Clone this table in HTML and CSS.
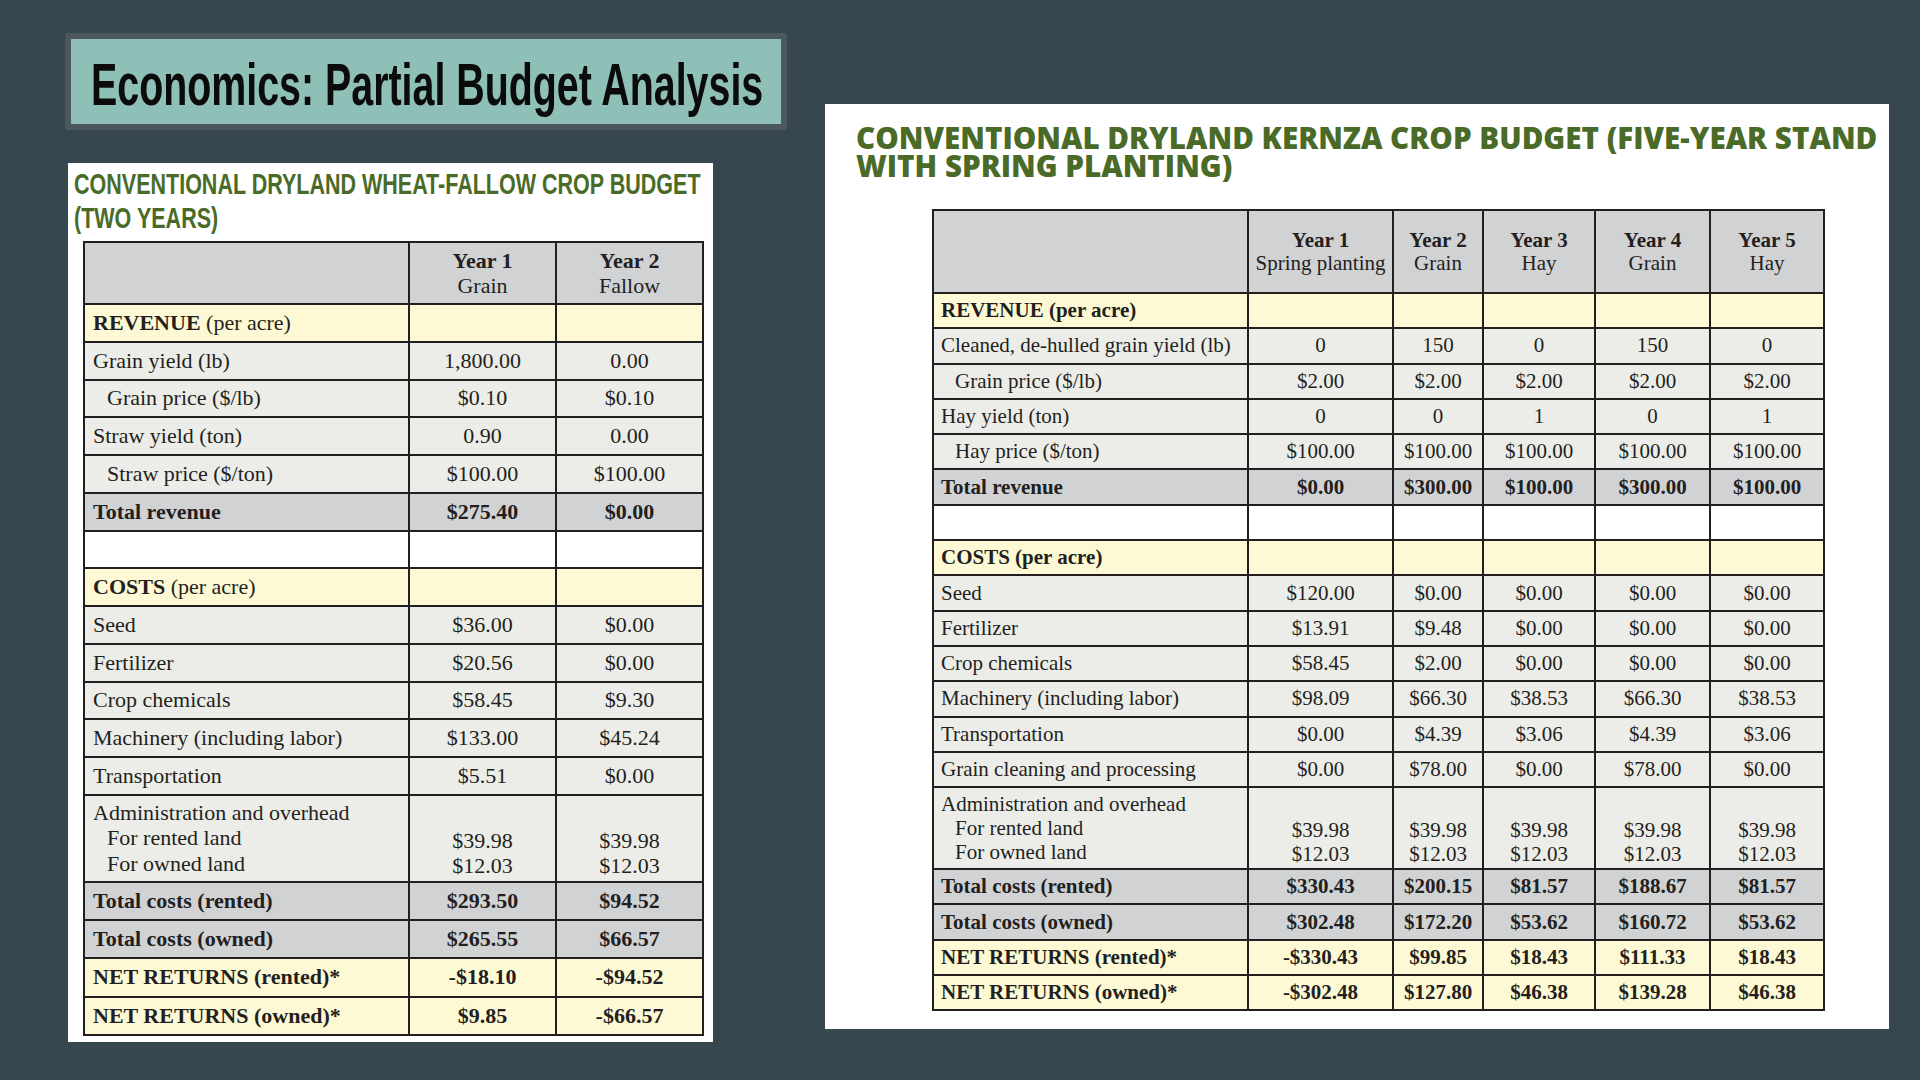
FILE: index.html
```html
<!DOCTYPE html>
<html>
<head>
<meta charset="utf-8">
<title>Economics: Partial Budget Analysis</title>
<link rel="stylesheet" href="styles.css">
</head>
<body>
<div class="page">
  <div class="left-col">
    <div class="title-box">
      <h1 class="title"><span class="title-text">Economics: Partial Budget Analysis</span></h1>
    </div>
    <div class="card card-left">
      <h2 class="cond-title"><span class="cond-line">CONVENTIONAL DRYLAND WHEAT-FALLOW CROP BUDGET</span><br><span class="cond-line">(TWO YEARS)</span></h2>
      <table class="budget budget-left">
        <colgroup><col class="lc-label"><col class="lc-val"><col class="lc-val"></colgroup>
        <tr class="hdr"><td></td><td class="num"><b>Year 1</b><br>Grain</td><td class="num"><b>Year 2</b><br>Fallow</td></tr>
        <tr class="sec"><td><b>REVENUE</b> (per acre)</td><td></td><td></td></tr>
        <tr class="row"><td>Grain yield (lb)</td><td class="num">1,800.00</td><td class="num">0.00</td></tr>
        <tr class="row"><td class="ind">Grain price ($/lb)</td><td class="num">$0.10</td><td class="num">$0.10</td></tr>
        <tr class="row"><td>Straw yield (ton)</td><td class="num">0.90</td><td class="num">0.00</td></tr>
        <tr class="row"><td class="ind">Straw price ($/ton)</td><td class="num">$100.00</td><td class="num">$100.00</td></tr>
        <tr class="tot"><td>Total revenue</td><td class="num">$275.40</td><td class="num">$0.00</td></tr>
        <tr class="blank"><td></td><td></td><td></td></tr>
        <tr class="sec"><td><b>COSTS</b> (per acre)</td><td></td><td></td></tr>
        <tr class="row"><td>Seed</td><td class="num">$36.00</td><td class="num">$0.00</td></tr>
        <tr class="row"><td>Fertilizer</td><td class="num">$20.56</td><td class="num">$0.00</td></tr>
        <tr class="row"><td>Crop chemicals</td><td class="num">$58.45</td><td class="num">$9.30</td></tr>
        <tr class="row"><td>Machinery (including labor)</td><td class="num">$133.00</td><td class="num">$45.24</td></tr>
        <tr class="row"><td>Transportation</td><td class="num">$5.51</td><td class="num">$0.00</td></tr>
        <tr class="row admin"><td class="admin-label">Administration and overhead<br><span class="sub">For rented land</span><br><span class="sub">For owned land</span></td><td class="num admin-val">$39.98<br>$12.03</td><td class="num admin-val">$39.98<br>$12.03</td></tr>
        <tr class="tot foot"><td>Total costs (rented)</td><td class="num">$293.50</td><td class="num">$94.52</td></tr>
        <tr class="tot foot"><td>Total costs (owned)</td><td class="num">$265.55</td><td class="num">$66.57</td></tr>
        <tr class="net foot"><td>NET RETURNS (rented)*</td><td class="num">-$18.10</td><td class="num">-$94.52</td></tr>
        <tr class="net foot"><td>NET RETURNS (owned)*</td><td class="num">$9.85</td><td class="num">-$66.57</td></tr>
      </table>
    </div>
  </div>
  <div class="right-col">
    <div class="card card-right">
      <h2 class="wide-title"><span class="wide-line">CONVENTIONAL DRYLAND KERNZA CROP BUDGET (FIVE-YEAR STAND</span><span class="wide-line">WITH SPRING PLANTING)</span></h2>
      <table class="budget budget-right">
        <colgroup><col class="rc-label"><col class="rc-1"><col class="rc-2"><col class="rc-3"><col class="rc-4"><col class="rc-5"></colgroup>
        <tr class="hdr"><td></td><td class="num"><b>Year 1</b><br>Spring planting</td><td class="num"><b>Year 2</b><br>Grain</td><td class="num"><b>Year 3</b><br>Hay</td><td class="num"><b>Year 4</b><br>Grain</td><td class="num"><b>Year 5</b><br>Hay</td></tr>
        <tr class="sec"><td><b>REVENUE (per acre)</b></td><td></td><td></td><td></td><td></td><td></td></tr>
        <tr class="row"><td>Cleaned, de-hulled grain yield (lb)</td><td class="num">0</td><td class="num">150</td><td class="num">0</td><td class="num">150</td><td class="num">0</td></tr>
        <tr class="row"><td class="ind">Grain price ($/lb)</td><td class="num">$2.00</td><td class="num">$2.00</td><td class="num">$2.00</td><td class="num">$2.00</td><td class="num">$2.00</td></tr>
        <tr class="row"><td>Hay yield (ton)</td><td class="num">0</td><td class="num">0</td><td class="num">1</td><td class="num">0</td><td class="num">1</td></tr>
        <tr class="row"><td class="ind">Hay price ($/ton)</td><td class="num">$100.00</td><td class="num">$100.00</td><td class="num">$100.00</td><td class="num">$100.00</td><td class="num">$100.00</td></tr>
        <tr class="tot"><td>Total revenue</td><td class="num">$0.00</td><td class="num">$300.00</td><td class="num">$100.00</td><td class="num">$300.00</td><td class="num">$100.00</td></tr>
        <tr class="blank"><td></td><td></td><td></td><td></td><td></td><td></td></tr>
        <tr class="sec"><td><b>COSTS (per acre)</b></td><td></td><td></td><td></td><td></td><td></td></tr>
        <tr class="row"><td>Seed</td><td class="num">$120.00</td><td class="num">$0.00</td><td class="num">$0.00</td><td class="num">$0.00</td><td class="num">$0.00</td></tr>
        <tr class="row"><td>Fertilizer</td><td class="num">$13.91</td><td class="num">$9.48</td><td class="num">$0.00</td><td class="num">$0.00</td><td class="num">$0.00</td></tr>
        <tr class="row"><td>Crop chemicals</td><td class="num">$58.45</td><td class="num">$2.00</td><td class="num">$0.00</td><td class="num">$0.00</td><td class="num">$0.00</td></tr>
        <tr class="row"><td>Machinery (including labor)</td><td class="num">$98.09</td><td class="num">$66.30</td><td class="num">$38.53</td><td class="num">$66.30</td><td class="num">$38.53</td></tr>
        <tr class="row"><td>Transportation</td><td class="num">$0.00</td><td class="num">$4.39</td><td class="num">$3.06</td><td class="num">$4.39</td><td class="num">$3.06</td></tr>
        <tr class="row"><td>Grain cleaning and processing</td><td class="num">$0.00</td><td class="num">$78.00</td><td class="num">$0.00</td><td class="num">$78.00</td><td class="num">$0.00</td></tr>
        <tr class="row admin"><td class="admin-label">Administration and overhead<br><span class="sub">For rented land</span><br><span class="sub">For owned land</span></td><td class="num admin-val">$39.98<br>$12.03</td><td class="num admin-val">$39.98<br>$12.03</td><td class="num admin-val">$39.98<br>$12.03</td><td class="num admin-val">$39.98<br>$12.03</td><td class="num admin-val">$39.98<br>$12.03</td></tr>
        <tr class="tot"><td>Total costs (rented)</td><td class="num">$330.43</td><td class="num">$200.15</td><td class="num">$81.57</td><td class="num">$188.67</td><td class="num">$81.57</td></tr>
        <tr class="tot"><td>Total costs (owned)</td><td class="num">$302.48</td><td class="num">$172.20</td><td class="num">$53.62</td><td class="num">$160.72</td><td class="num">$53.62</td></tr>
        <tr class="net"><td>NET RETURNS (rented)*</td><td class="num">-$330.43</td><td class="num">$99.85</td><td class="num">$18.43</td><td class="num">$111.33</td><td class="num">$18.43</td></tr>
        <tr class="net"><td>NET RETURNS (owned)*</td><td class="num">-$302.48</td><td class="num">$127.80</td><td class="num">$46.38</td><td class="num">$139.28</td><td class="num">$46.38</td></tr>
      </table>
    </div>
  </div>
</div>
</body>
</html>
```

FILE: styles.css
```css
* { box-sizing: border-box; }
html, body { margin: 0; padding: 0; }
body {
  background: #37474f;
  width: 1920px;
  height: 1080px;
  overflow: hidden;
  font-family: "Liberation Serif", "Times New Roman", serif;
  color: #231f20;
}
.page {
  display: flex;
  align-items: flex-start;
  padding: 33px 0 0 65px;
}
.left-col { width: 722px; flex: none; }
.right-col { margin: 71px 0 0 38px; flex: none; }

.title-box {
  height: 97px;
  background: #8fc0b8;
  border: 6px solid #4c575e;
  border-radius: 3px;
  padding: 16px 0 0 20px;
  overflow: hidden;
}
.title {
  margin: 0;
  font-family: "Liberation Sans", Arial, sans-serif;
  font-weight: 700;
  font-size: 60px;
  line-height: 60px;
  white-space: nowrap;
  color: #0b0b0b;
}
.title-text {
  display: inline-block;
  transform: scaleX(0.656);
  transform-origin: left center;
}

.card { background: #ffffff; }
.card-left {
  margin: 33px 0 0 3px;
  width: 645px;
  height: 879px;
  overflow: hidden;
}
.cond-title {
  margin: 0;
  padding: 4px 0 0 6px;
  font-family: "Liberation Sans", Arial, sans-serif;
  font-weight: 700;
  font-size: 30px;
  line-height: 34px;
  color: #4a6b27;
  white-space: nowrap;
}
.cond-line {
  display: inline-block;
  transform: scaleX(0.717);
  transform-origin: left center;
}

.card-right {
  width: 1064px;
  height: 925px;
}
.wide-title {
  margin: 0;
  padding: 20px 0 0 31px;
  font-family: "Open Sans", "Liberation Sans", sans-serif;
  font-weight: 800;
  font-size: 29.6px;
  line-height: 28px;
  color: #4a6b27;
  white-space: nowrap;
}
.wide-line {
  display: block;
  height: 28px;
}

.budget {
  border-collapse: collapse;
  table-layout: fixed;
}
.budget td {
  border: 2px solid #231f20;
  padding: 0 7px;
  vertical-align: middle;
  white-space: nowrap;
  overflow: hidden;
}
.budget .num { text-align: center; padding: 0 2px; }
.budget .ind { padding-left: 21px; }
.budget .sub { padding-left: 14px; }
.budget .hdr td { background: #d1d2d4; }
.budget .sec td { background: #fef9d5; }
.budget .row td { background: #ecede8; }
.budget .tot td { background: #d1d2d4; font-weight: 700; }
.budget .net td { background: #fef9d5; font-weight: 700; }
.budget .blank td { background: #ffffff; }

/* left table */
.budget-left {
  margin: 6px 0 0 15px;
  width: 620px;
  font-size: 22px;
}
.budget-left .lc-label { width: 325px; }
.budget-left .lc-val { width: 147px; }
.budget-left tr { height: 37.75px; }
.budget-left tr.foot { height: 38.3px; }
.budget-left tr.hdr { height: 62px; }
.budget-left tr.hdr td { line-height: 25px; }
.budget-left tr.admin { height: 87px; }
.budget-left td { padding-left: 8px; }
.budget-left td.num { padding-left: 2px; }
.budget-left td.ind { padding-left: 22px; }
.budget-left .admin-label { line-height: 25.5px; vertical-align: top; padding-top: 4px; }
.budget-left .admin-val { line-height: 25px; vertical-align: bottom; padding-bottom: 3px; }

/* right table */
.budget-right {
  margin: 29px 0 0 107px;
  width: 891px;
  font-size: 21px;
}
.budget-right .rc-label { width: 315px; }
.budget-right .rc-1 { width: 145px; }
.budget-right .rc-2 { width: 90px; }
.budget-right .rc-3 { width: 112px; }
.budget-right .rc-4 { width: 115px; }
.budget-right .rc-5 { width: 114px; }
.budget-right tr { height: 35.3px; }
.budget-right tr.hdr { height: 83px; }
.budget-right tr.hdr td { line-height: 23px; }
.budget-right tr.admin { height: 82px; }
.budget-right .admin-label { line-height: 24px; vertical-align: top; padding-top: 4px; }
.budget-right .admin-val { line-height: 23.5px; vertical-align: bottom; padding-bottom: 2px; }
```
